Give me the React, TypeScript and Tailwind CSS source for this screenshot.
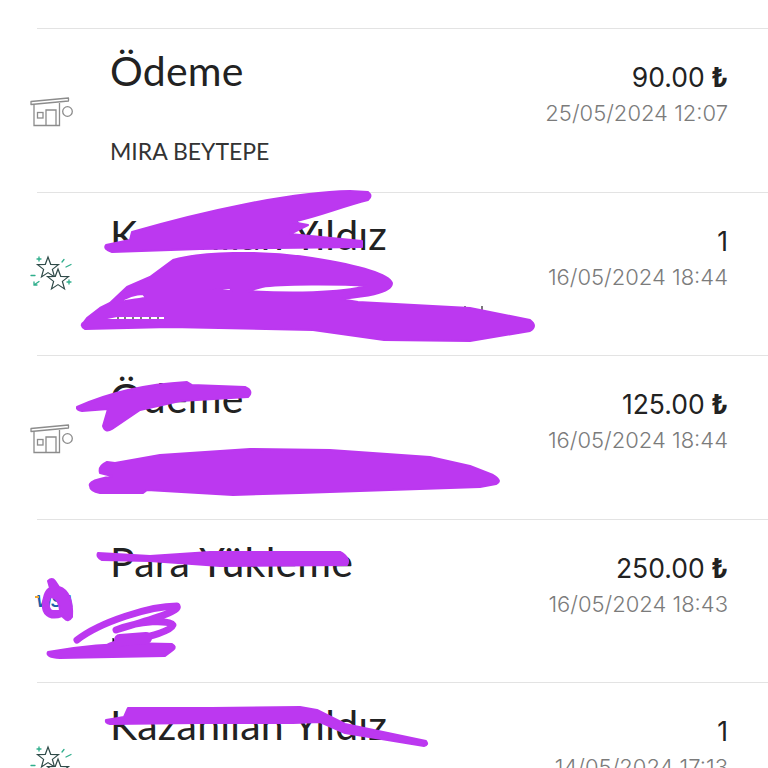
const ShopIcon = () => (
  <svg width="46" height="40" viewBox="0 -2 46 40" fill="none" stroke="#8c8c8c" strokeWidth="1.3">
    <path d="M1 9.5 L38.5 6 L38.5 9 L1 12.5 Z" strokeLinejoin="round" />
    <path d="M4 12 V33.5 H29.5 V11" />
    <rect x="7.5" y="20.5" width="5.5" height="5.5" />
    <path d="M16 33.5 V18 H26 V33.5" />
    <circle cx="37.5" cy="19.5" r="4.8" />
  </svg>
);

const StarIcon = () => (
  <svg width="46" height="40" viewBox="0 0 46 40" fill="none">
    <polygon
      points="18,3 20.7,10.3 28.5,10.6 22.4,15.4 24.5,22.9 18,18.6 11.5,22.9 13.6,15.4 7.5,10.6 15.3,10.3"
      stroke="#2f4a48"
      strokeWidth="1.2"
      fill="#fff"
    />
    <polygon
      points="28,15 30.7,22.3 38.5,22.6 32.4,27.4 34.5,34.9 28,30.6 21.5,34.9 23.6,27.4 17.5,22.6 25.3,22.3"
      stroke="#2f4a48"
      strokeWidth="1.2"
      fill="#fff"
    />
    <g stroke="#2fae8c" strokeWidth="1.3" strokeLinecap="round">
      <path d="M9 3 V7 M7 5 H11" />
      <path d="M39 26 V30 M37 28 H41" />
      <path d="M1 21.5 H5" />
      <path d="M4 31 L9 27.5 M4 28 V31 H7" />
      <path d="M32 8 L34 5.5" />
      <path d="M36 13 L41 10.5" />
    </g>
  </svg>
);

const VisaIcon = () => (
  <span className="relative block h-[40px] w-[46px]">
    <span className="absolute left-[6px] top-[9px] text-[16px] font-bold italic leading-[24px] text-[#1a5fa8] [font-family:'Liberation_Sans',sans-serif]">
      VISA
    </span>
    <span className="absolute left-[5px] top-[15px] h-[2px] w-[4px] bg-[#f0a830]" />
  </span>
);

type Tx = {
  icon: React.ReactNode;
  title: string;
  subtitle?: string;
  amount: string;
  lira?: boolean;
  date: string;
};

const rows: Tx[] = [
  { icon: <ShopIcon />, title: "Ödeme", subtitle: "MIRA BEYTEPE", amount: "90.00", lira: true, date: "25/05/2024 12:07" },
  { icon: <StarIcon />, title: "Kazanılan Yıldız", amount: "1", date: "16/05/2024 18:44" },
  { icon: <ShopIcon />, title: "Ödeme", amount: "125.00", lira: true, date: "16/05/2024 18:44" },
  { icon: <VisaIcon />, title: "Para Yükleme", amount: "250.00", lira: true, date: "16/05/2024 18:43" },
  { icon: <StarIcon />, title: "Kazanılan Yıldız", amount: "1", date: "14/05/2024 17:13" },
];

const Row = ({ item }: { item: Tx }) => (
  <div className="flex h-[163.5px] shrink-0 border-t border-[#e3e3e3]">
    <div className="ml-[-7px] flex w-[80px] shrink-0 items-center">{item.icon}</div>
    <div className="flex min-w-0 flex-1 flex-col pt-[18px]">
      <div className="text-[41px] leading-[48px] tracking-[0.2px] text-[#222] [font-family:Lato,sans-serif]">
        {item.title}
      </div>
      <div className="mt-[42px] text-[23px] leading-[28px] text-[#333] [font-family:Lato,sans-serif]">
        {item.subtitle}
      </div>
    </div>
    <div className="flex shrink-0 flex-col items-end pr-[40px] pt-[30px] [font-family:Inter,sans-serif]">
      <div className="text-[26.5px] leading-[36px] text-[#222]">
        {item.amount}
        {item.lira && <span className="font-bold"> ₺</span>}
      </div>
      <div className="mt-[4px] text-[22px] font-light leading-[28px] text-[#7b7b7b]">{item.date}</div>
    </div>
  </div>
);

// the hand-drawn purple marks that sit on top of the list
const Scribbles = () => (
  <svg className="pointer-events-none absolute left-0 top-0" width="768" height="768" viewBox="0 0 768 768">
    <g stroke="#222" strokeWidth="1.2">
      <path d="M118 316 V319 M125 316 V319 M133 316 V319 M141 316 V319 M150 316 V319 M158 316 V319" />
      <path d="M451 308 V312 M465 306 V312 M482 306 V312" />
      <path d="M112 470 V477 M482 470 V486" />
      <path d="M113 638 V644 H118" />
    </g>
    <g fill="#bc38f0" stroke="#bc38f0" strokeWidth="2" strokeLinejoin="round">
      <path d="M132 232 C 200 212, 290 192, 350 191 L368 192 Q373 196 368 200 C 340 207, 320 216, 292 222 L 308 225 L 290 234 L 362 241 L 362 247 L 200 249 L 112 252 Q 103 249 106 245 L 130 240 Z" />
      <path
        fillRule="evenodd"
        d="M173 260 C 200 252, 260 250, 312 258 C 350 264, 388 272, 392 283 C 392 294, 360 297, 340 299 L 358 302 L 470 308 L 530 320 Q 538 326 530 331 L 470 341 L 384 340 L 313 330 L 170 327 L 85 329 Q 79 325 84 322 L 87 318 L 100 308 L 110 303 L 127 287 L 150 277 Z M247 291 C 290 294, 340 293, 367 286 C 340 284, 280 284, 262 287 Z M120 302 C 126 297, 136 294, 143 294 L 146 298 C 136 299, 128 301, 120 302 Z M97 320 L 117 316 L 165 316 L 165 320 Z M207 291 L 230 288 L 232 291 Z"
      />
      <path d="M77 407 C 110 392, 150 384, 187 382 L 192 385 L 245 387 Q 254 391 248 397 L 180 401 L 140 410 L 112 429 Q 105 433 103 426 L 108 409 L 82 411 Q 76 410 77 407 Z" />
      <path d="M90 486 Q 88 482 100 479 L 112 476 L 100 473 Q 98 466 107 462 L 115 463 L 160 455 L 250 449 L 330 450 L 430 457 L 470 466 L 493 475 Q 503 481 496 484 L 480 487 L 300 493 L 233 495 L 147 490 L 143 493 L 100 493 Q 90 491 90 486 Z" />
      <path d="M98 553 L 150 556 L 210 552 L 340 552 Q 351 558 347 565 L 220 566 L 150 561 L 102 560 Q 96 557 98 553 Z" />
      <path d="M106 720 L 124 717 L 128 708 L 212 708 L 300 707 L 317 710 L 345 724 L 426 741 Q 429 745 424 746 L 345 733 L 320 722 L 293 723 L 200 723 L 110 724 Q 105 723 106 720 Z" />
      <path d="M48 652 C 70 648, 110 642, 172 644 Q 177 647 173 650 L 165 656 L 60 658 Q 45 657 48 652 Z" />
      <path
        fillRule="evenodd"
        d="M48 581 Q 52 577 55 581 L 59 587 C 69 590, 73 602, 72 617 Q 68 623 64 618 L 62 616 C 52 620, 44 616, 43 608 C 42 598, 46 590, 50 588 Z M50 597 C 47 603, 49 611, 53 611 L 60 611 C 60 604, 57 597, 50 597 Z"
      />
    </g>
    <g fill="none" stroke="#bc38f0" strokeLinecap="round" strokeLinejoin="round">
      <path strokeWidth="7" d="M77 640 C 100 622, 150 606, 177 606 C 180 612, 148 620, 116 630 C 140 620, 170 620, 173 625 C 170 634, 130 640, 110 646" />
      <path strokeWidth="12" d="M120 640 L 146 638" />
    </g>
  </svg>
);

export default function App() {
  return (
    <div className="relative h-[768px] w-[768px] overflow-hidden bg-white">
      <div className="flex h-full flex-col pl-[37px] pt-[28px]">
        {rows.map((r) => (
          <Row key={r.title + r.date} item={r} />
        ))}
      </div>
      <Scribbles />
    </div>
  );
}
